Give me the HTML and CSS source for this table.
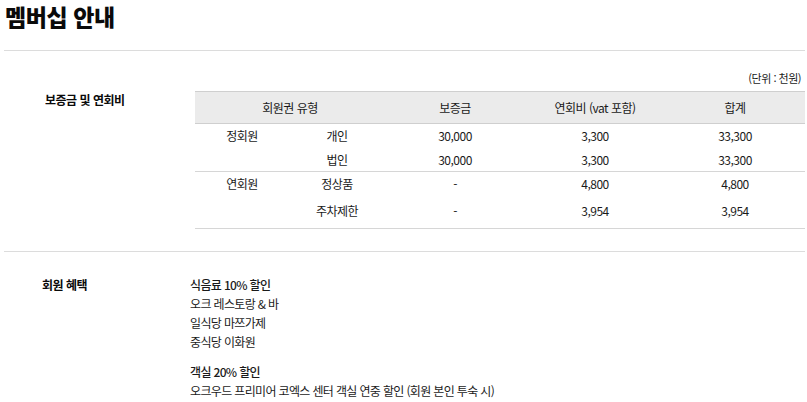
FILE: index.html
```html
<!DOCTYPE html>
<html lang="ko">
<head>
<meta charset="utf-8">
<link rel="stylesheet" href="styles.css">
</head>
<body>
<div class="page">
  <h1 class="title">멤버십 안내</h1>
  <section class="section sec-fee">
    <h2 class="label label-fee">보증금 및 연회비</h2>
    <div class="content">
      <p class="unit">(단위 : 천원)</p>
      <table class="fee-table">
        <colgroup>
          <col class="c1"><col class="c2"><col class="c3"><col class="c4"><col class="c5">
        </colgroup>
        <thead>
          <tr><th colspan="2">회원권 유형</th><th>보증금</th><th>연회비 (vat 포함)</th><th>합계</th></tr>
        </thead>
        <tbody class="grp grp1">
          <tr class="r1"><td>정회원</td><td>개인</td><td>30,000</td><td>3,300</td><td>33,300</td></tr>
          <tr class="r2"><td></td><td>법인</td><td>30,000</td><td>3,300</td><td>33,300</td></tr>
        </tbody>
        <tbody class="grp grp2">
          <tr class="r3"><td>연회원</td><td>정상품</td><td>-</td><td>4,800</td><td>4,800</td></tr>
          <tr class="r4"><td></td><td>주차제한</td><td>-</td><td>3,954</td><td>3,954</td></tr>
        </tbody>
      </table>
    </div>
  </section>
  <section class="section sec-benefit">
    <h2 class="label label-benefit">회원 혜택</h2>
    <div class="content benefits">
      <ul class="blist">
        <li class="bhead">식음료 10% 할인</li>
        <li>오크 레스토랑 &amp; 바</li>
        <li>일식당 마쯔가제</li>
        <li>중식당 이화원</li>
      </ul>
      <ul class="blist">
        <li class="bhead">객실 20% 할인</li>
        <li>오크우드 프리미어 코엑스 센터 객실 연중 할인 (회원 본인 투숙 시)</li>
      </ul>
    </div>
  </section>
</div>
</body>
</html>
```

FILE: styles.css
```css
* { box-sizing: border-box; }
html, body { margin: 0; padding: 0; background: #fff; }
body {
  font-family: "Noto Sans CJK KR", "Noto Sans", sans-serif;
  color: #1a1a1a;
  font-size: 12px;
}
.page {
  width: 805px;
  padding-left: 4px;
}
.title {
  margin: 0;
  height: 51px;
  padding: 2px 0 0 1px;
  font-size: 23px;
  line-height: 28px;
  font-weight: 800;
  color: #0a0a0a;
  border-bottom: 1px solid #dcdcdc;
  letter-spacing: -0.4px;
}
.section {
  display: grid;
  grid-template-columns: 186px 1fr;
  border-bottom: 1px solid #dcdcdc;
}
.sec-fee { height: 201px; }
.sec-benefit { border-bottom: 0; }
.label {
  margin: 0;
  font-size: 12px;
  font-weight: 700;
  color: #0a0a0a;
  letter-spacing: -0.5px;
}
.label-fee { padding: 40px 0 0 41px; }
.label-benefit { padding: 24px 0 0 38px; }
.content { min-width: 0; }
.unit {
  margin: 19px 0 0;
  text-align: right;
  font-size: 11px;
  line-height: 16px;
  padding-right: 4px;
  letter-spacing: -0.5px;
}
.fee-table {
  margin: 5px 0 0 5px;
  width: 610px;
  border-collapse: collapse;
  table-layout: fixed;
  letter-spacing: -0.5px;
}
.c1 { width: 94px; }
.c2 { width: 96px; }
.c3, .c4, .c5 { width: 140px; }
.fee-table th {
  background: #ebebeb;
  font-weight: 400;
  height: 32px;
  border-top: 1px solid #cfcfcf;
  border-bottom: 1px solid #cfcfcf;
  text-align: center;
  padding: 0;
}
.fee-table td {
  text-align: center;
  padding: 0;
}
.r1 td, .r2 td, .r3 td { height: 24px; }
.r4 td { height: 33px; padding-bottom: 3px; }
.grp1 { border-bottom: 1px solid #d6d6d6; }
.grp2 { border-bottom: 1px solid #d6d6d6; }
.benefits { padding: 23px 0 0 0; }
.blist {
  list-style: none;
  margin: 0 0 11px;
  padding: 0;
  line-height: 19px;
  letter-spacing: -0.65px;
}
.bhead { font-weight: 500; }
```
